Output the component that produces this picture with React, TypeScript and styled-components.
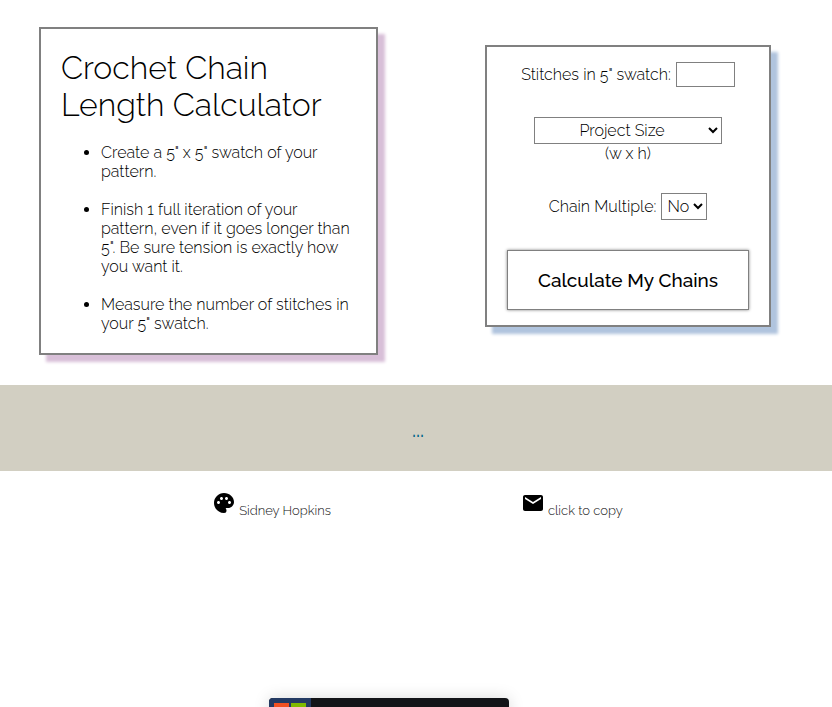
import React from "react";
import styled, { createGlobalStyle, css } from "styled-components";

const GlobalStyle = createGlobalStyle`
  * { box-sizing: border-box; }
  html, body, #root { height: 100%; }
  body {
    margin: 0;
    overflow: hidden;
    background: #fff;
    color: #000;
    font-family: Raleway, Lato, sans-serif;
    font-size: 16px;
    font-weight: 300;
    line-height: 19px;
  }
  input, select, button { font: inherit; color: inherit; }
`;

const Top = styled.main`
  display: flex;
  justify-content: space-between;
  align-items: center;
  gap: 24px;
  padding: 27px 61px 30px 39px;
`;

const Card = styled.section<{ $shadow: string }>`
  border: 2px solid #808080;
  background: #fff;
  box-shadow: 7px 7px 3px ${(p) => p.$shadow};
`;

const Instructions = styled(Card)`
  flex: 0 1 339px;
  padding: 20px;
`;

const Title = styled.h1`
  margin: 0 0 20px;
  font-size: 32px;
  line-height: 37px;
  font-weight: 300;
`;

const Steps = styled.ul`
  display: grid;
  gap: 19px;
  margin: 0;
  padding-left: 40px;
`;

const Form = styled(Card).attrs({ as: "form" })`
  flex: 0 1 286px;
  display: flex;
  flex-direction: column;
  align-items: center;
  gap: 30px;
  margin-bottom: 10px;
  padding: 15px 20px;
`;

const Field = styled.label`
  display: flex;
  align-items: center;
  gap: 5px;
`;

const SizeField = styled.label`
  display: grid;
  justify-items: center;
`;

const StitchInput = styled.input`
  width: 59px;
  height: 25px;
  padding: 1px 4px;
  border: 1px solid #808080;
  border-radius: 0;
  background: #fff;
`;

const Select = styled.select<{ $width: number }>`
  width: ${(p) => p.$width}px;
  height: 27px;
  padding: 0;
  border: 1px solid #808080;
  border-radius: 0;
  background: #fff;
  text-align: center;
`;

const CalculateButton = styled.button`
  align-self: stretch;
  height: 60px;
  padding: 0;
  border: 1px solid #808080;
  background: #fff;
  box-shadow: 0 0 3px #808080;
  font-size: 19px;
  font-weight: 500;
`;

const Result = styled.output`
  display: flex;
  align-items: center;
  justify-content: center;
  height: 86px;
  padding: 4px 0 0 4px;
  background: #d2cfc2;
  color: #00688b;
  font-size: 20px;
  font-weight: 500;
`;

const Footer = styled.footer`
  display: flex;
  justify-content: center;
  gap: 190px;
  padding: 20px 0 0 3px;
  font-size: 13px;
`;

const contact = css`
  display: flex;
  align-items: flex-end;
  gap: 3px;
  height: 29px;
  color: #111;
`;

const ContactLink = styled.a`
  ${contact}
  text-decoration: none;
`;

const CopyButton = styled.button`
  ${contact}
  padding: 0;
  border: 0;
  background: none;
`;

const Icon = styled.svg`
  width: 24px;
  height: 24px;
  margin-bottom: 5px;
  fill: #000;
`;

const BannerRow = styled.aside`
  display: flex;
  justify-content: center;
  padding: 178px 54px 0 0;
`;

const Banner = styled.div`
  width: 240px;
  height: 42px;
  overflow: hidden;
  border-radius: 4px;
  background: #131418;
  box-shadow: 0 0 16px rgba(0, 0, 0, 0.15);
`;

const Badge = styled.svg`
  display: block;
  width: 42px;
  height: 42px;
  background: #233a63;
`;

export default function App() {
  return (
    <>
      <GlobalStyle />
      <Top>
        <Instructions $shadow="#d8bfd8">
          <Title>Crochet Chain Length Calculator</Title>
          <Steps>
            <li>Create a 5" x 5" swatch of your pattern.</li>
            <li>
              Finish 1 full iteration of your pattern, even if it goes longer
              than 5". Be sure tension is exactly how you want it.
            </li>
            <li>Measure the number of stitches in your 5" swatch.</li>
          </Steps>
        </Instructions>
        <Form $shadow="#b0c4de">
          <Field>
            Stitches in 5" swatch:
            <StitchInput type="text" inputMode="numeric" />
          </Field>
          <SizeField>
            <Select $width={188}>
              <option>Project Size</option>
              <option>Baby blanket</option>
              <option>Throw</option>
            </Select>
            (w x h)
          </SizeField>
          <Field>
            Chain Multiple:
            <Select $width={46}>
              <option>No</option>
              <option>Yes</option>
            </Select>
          </Field>
          <CalculateButton type="button">Calculate My Chains</CalculateButton>
        </Form>
      </Top>
      <Result>...</Result>
      <Footer>
        <ContactLink href="#portfolio">
          <Icon viewBox="0 0 24 24" aria-hidden="true">
            <path d="M12 2C6.490 2 2 6.490 2 12s4.490 10 10 10a2.500 2.500 0 0 0 2.500-2.500c0-.61-.23-1.200-.64-1.670a.528.528 0 0 1-.13-.33c0-.28.22-.5.5-.5H16c3.310 0 6-2.690 6-6 0-4.960-4.490-9-10-9zm-5.500 11c-.83 0-1.500-.67-1.500-1.500S5.670 10 6.500 10s1.500.67 1.500 1.500S7.330 13 6.500 13zm3-4C8.670 9 8 8.330 8 7.500S8.670 6 9.500 6s1.500.67 1.500 1.500S10.330 9 9.500 9zm5 0c-.83 0-1.500-.67-1.500-1.500S13.670 6 14.500 6s1.500.67 1.500 1.500S15.330 9 14.500 9zm3 4c-.83 0-1.500-.67-1.500-1.500s.67-1.500 1.500-1.500 1.500.67 1.500 1.500-.67 1.500-1.500 1.500z" />
          </Icon>
          Sidney Hopkins
        </ContactLink>
        <CopyButton type="button">
          <Icon viewBox="0 0 24 24" aria-hidden="true">
            <path d="M20 4H4c-1.100 0-1.990.9-1.990 2L2 18c0 1.100.9 2 2 2h16c1.100 0 2-.9 2-2V6c0-1.100-.9-2-2-2zm0 4-8 5-8-5V6l8 5 8-5v2z" />
          </Icon>
          click to copy
        </CopyButton>
      </Footer>
      <BannerRow>
        <Banner>
          <Badge viewBox="0 0 42 42" aria-hidden="true">
            <path fill="#f25022" d="M5 5h15v15H5z" />
            <path fill="#7fba00" d="M22 5h15v15H22z" />
            <path fill="#00a4ef" d="M5 22h15v15H5z" />
            <path fill="#ffb900" d="M22 22h15v15H22z" />
          </Badge>
        </Banner>
      </BannerRow>
    </>
  );
}
